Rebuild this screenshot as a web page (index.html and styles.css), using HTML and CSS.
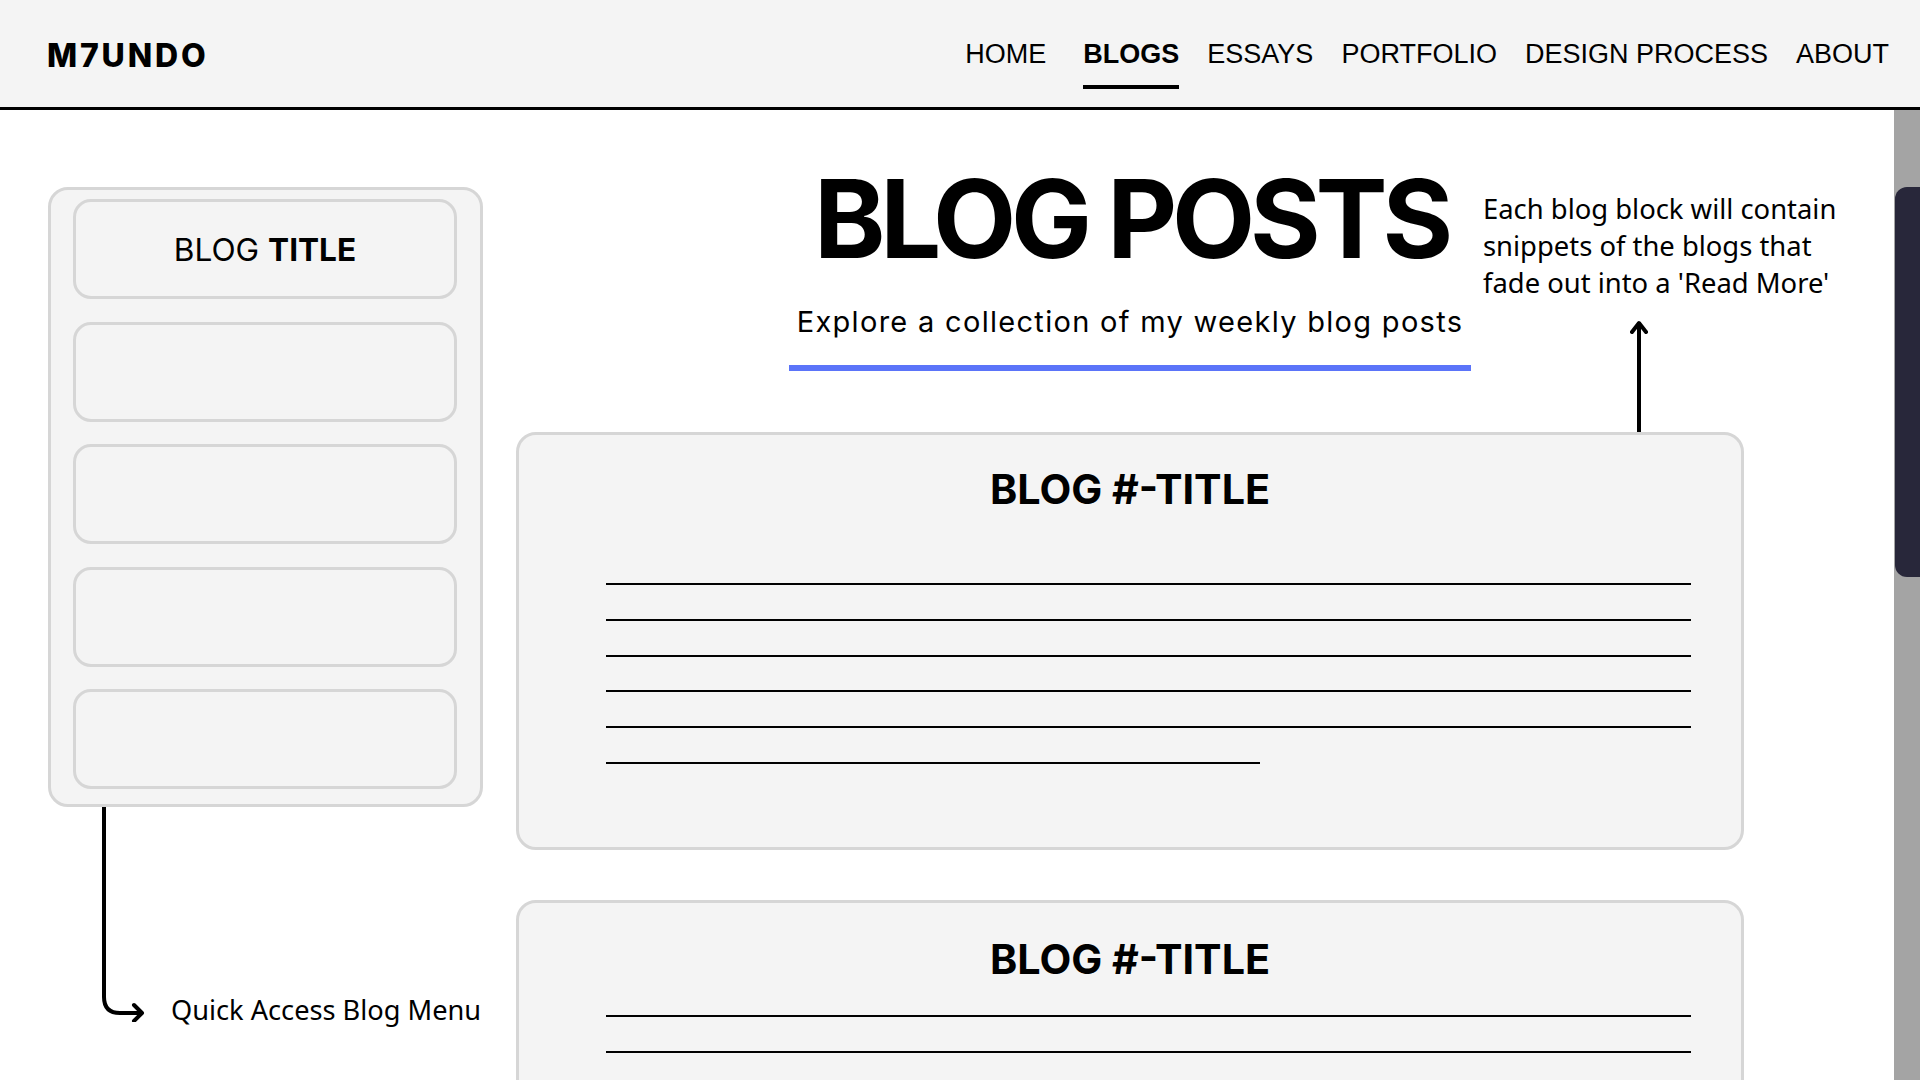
FILE: index.html
```html
<!DOCTYPE html>
<html lang="en">
<head>
<meta charset="utf-8">
<title>M7UNDO – Blog Posts</title>
<link rel="stylesheet" href="styles.css">
</head>
<body>
<header class="topbar">
  <div class="logo">M7UNDO</div>
  <nav class="nav">
    <a class="nav-link">HOME</a>
    <a class="nav-link active">BLOGS</a>
    <a class="nav-link">ESSAYS</a>
    <a class="nav-link">PORTFOLIO</a>
    <a class="nav-link">DESIGN PROCESS</a>
    <a class="nav-link">ABOUT</a>
  </nav>
</header>
<div class="page">
  <div class="content">
    <aside class="sidebar">
      <div class="quick-menu">
        <div class="quick-item"><span class="qi-light">BLOG</span>&nbsp;<span class="qi-bold">TITLE</span></div>
        <div class="quick-item"></div>
        <div class="quick-item"></div>
        <div class="quick-item"></div>
        <div class="quick-item"></div>
      </div>
      <div class="menu-note">
        <svg class="note-arrow" width="52" height="215" viewBox="0 0 52 215">
          <path d="M8 0 V190 Q8 206 24 206 H46" fill="none" stroke="#000" stroke-width="4"/>
          <path d="M38 198 L46 206 L38 214" fill="none" stroke="#000" stroke-width="4" stroke-linecap="round" stroke-linejoin="round"/>
        </svg>
        <span class="note-label">Quick Access Blog Menu</span>
      </div>
    </aside>
    <main class="posts">
      <section class="hero">
        <h1 class="hero-title">BLOG POSTS</h1>
        <p class="hero-sub">Explore a collection of my weekly blog posts</p>
        <div class="hero-accent"></div>
        <div class="annotation">
          <p class="annotation-text">Each blog block will contain<br>snippets of the blogs that<br>fade out into a 'Read More'</p>
          <svg class="annotation-arrow" width="18" height="112" viewBox="0 0 18 112">
            <path d="M9 2 V112" stroke="#000" stroke-width="4" fill="none"/>
            <path d="M2 12 L9 3 L16 12" stroke="#000" stroke-width="4" fill="none" stroke-linecap="round" stroke-linejoin="round"/>
          </svg>
        </div>
      </section>
      <article class="card">
        <h2 class="card-title">BLOG #-TITLE</h2>
        <div class="card-lines">
          <div class="line"></div>
          <div class="line"></div>
          <div class="line"></div>
          <div class="line"></div>
          <div class="line"></div>
          <div class="line short"></div>
        </div>
      </article>
      <article class="card card-next">
        <h2 class="card-title">BLOG #-TITLE</h2>
        <div class="card-lines">
          <div class="line"></div>
          <div class="line"></div>
          <div class="line"></div>
          <div class="line"></div>
        </div>
      </article>
    </main>
  </div>
  <div class="scrollbar"><div class="scroll-thumb"></div></div>
</div>
</body>
</html>
```
FILE: styles.css
```css
* { box-sizing: border-box; }
html, body { margin: 0; padding: 0; }
body {
  width: 1920px;
  height: 1080px;
  overflow: hidden;
  background: #ffffff;
  color: #000;
  font-family: "Liberation Sans", Arial, sans-serif;
}

/* ---------- header ---------- */
.topbar {
  height: 110px;
  background: #f4f4f4;
  border-bottom: 3px solid #000;
  display: flex;
  align-items: center;
  justify-content: space-between;
  padding: 0 31px 0 47px;
}
.logo {
  font-family: Inter, "Liberation Sans", sans-serif;
  font-weight: 800;
  font-size: 32px;
  letter-spacing: 2.8px;
  line-height: 1;
  margin-top: 4px;
}
.nav {
  display: flex;
  gap: 28px;
  align-items: center;
  height: 100%;
}
.nav-link {
  position: relative;
  font-size: 27px;
  line-height: 1;
  color: #000;
  margin-top: 2px;
}
.nav-link:first-child { margin-right: 9px; }
.nav-link.active { font-weight: 700; }
.nav-link.active::after {
  content: "";
  position: absolute;
  left: 0;
  right: 0;
  top: 44px;
  height: 4px;
  background: #000;
}

/* ---------- page ---------- */
.page {
  display: flex;
  height: 970px;
}
.content {
  flex: 1;
  display: flex;
  gap: 33px;
  padding-left: 48px;
}
.scrollbar {
  width: 26px;
  background: #a4a4a4;
  padding-top: 77px;
}
.scroll-thumb {
  height: 390px;
  margin-left: 1px;
  background: #28273a;
  border-radius: 12px 0 0 12px;
}

/* ---------- sidebar ---------- */
.sidebar {
  width: 435px;
  flex: none;
  padding-top: 77px;
}
.quick-menu {
  background: #f4f4f4;
  border: 3px solid #d6d6d6;
  border-radius: 20px;
  padding: 9px 23px 15px 22px;
  display: flex;
  flex-direction: column;
  gap: 22.5px;
}
.quick-item {
  height: 100px;
  border: 3px solid #d6d6d6;
  border-radius: 18px;
  background: #f4f4f4;
  display: flex;
  align-items: center;
  justify-content: center;
  font-family: Inter, "Liberation Sans", sans-serif;
  font-size: 31.6px;
}
.qi-light { font-weight: 400; }
.qi-bold { font-weight: 700; }

.menu-note {
  display: flex;
  align-items: flex-end;
  gap: 23px;
  padding-left: 48px;
}
.note-arrow { display: block; flex: none; }
.note-label {
  font-family: "Noto Sans", "Open Sans", sans-serif;
  font-size: 27.2px;
  line-height: 32px;
  margin-bottom: -4px;
}

/* ---------- posts ---------- */
.posts {
  width: 1228px;
  flex: none;
}
.hero {
  position: relative;
  text-align: center;
  padding-top: 55px;
}
.hero-title {
  margin: 0 0 0 2px;
  font-family: Inter, "Liberation Sans", sans-serif;
  font-weight: 700;
  font-size: 108px;
  line-height: 108px;
  letter-spacing: -5.2px;
}
.hero-sub {
  margin: 32px 0 0;
  font-family: Inter, "Liberation Sans", sans-serif;
  font-size: 29px;
  line-height: 34px;
  letter-spacing: 1.3px;
}
.hero-accent {
  width: 682px;
  height: 6px;
  margin: 26px auto 0;
  background: #5b74f9;
}
.annotation {
  position: absolute;
  left: 967px;
  top: 80px;
  text-align: left;
}
.annotation-text {
  margin: 0;
  font-family: "Noto Sans", "Open Sans", sans-serif;
  font-size: 27.4px;
  line-height: 37px;
  white-space: nowrap;
}
.annotation-arrow {
  display: block;
  margin: 19px 0 0 147px;
}

.card {
  margin-top: 61px;
  background: #f4f4f4;
  border: 3px solid #d6d6d6;
  border-radius: 20px;
  padding: 30px 50px 83px 87px;
}
.card-next {
  margin-top: 50px;
  padding-top: 32px;
}
.card-title {
  margin: 0;
  text-align: center;
  margin-left: -37px;
  font-family: Inter, "Liberation Sans", sans-serif;
  font-weight: 700;
  font-size: 41.3px;
  line-height: 48px;
}
.card-lines {
  margin-top: 70px;
  display: flex;
  flex-direction: column;
  gap: 33.8px;
}
.card-next .card-lines { margin-top: 32px; }
.line {
  height: 2px;
  background: #000;
}
.line.short { width: 654px; }
```
